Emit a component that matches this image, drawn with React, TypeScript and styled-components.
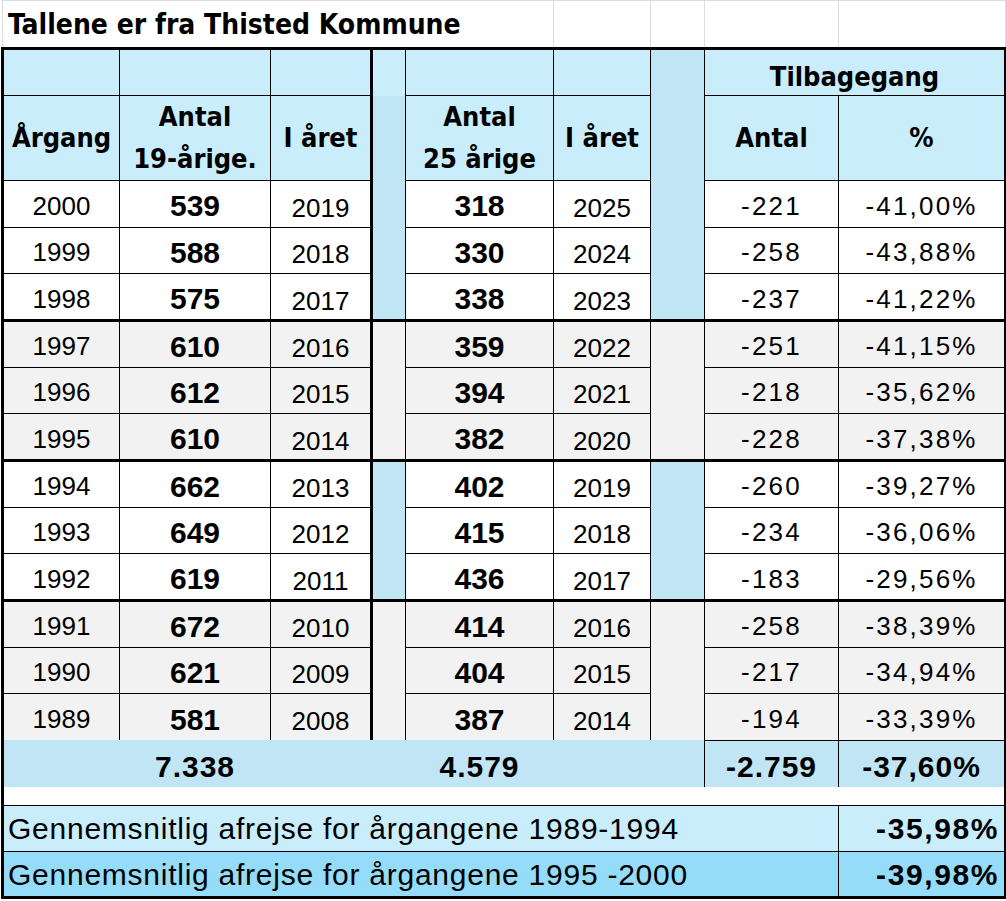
import React from "react";
import styled, { createGlobalStyle, css } from "styled-components";

const GlobalStyle = createGlobalStyle`
  html, body {
    margin: 0;
    padding: 0;
    background: #ffffff;
  }
  body {
    font-family: "Liberation Sans", Arial, sans-serif;
    color: #000;
  }
`;

const HEAD_BLUE = "#caedfb";
const BAR_BLUE = "#c0e6f5";
const DEEP_BLUE = "#95dcf8";
const GREY = "#f2f2f2";
const GRID = "#dcdcdc";

const THIN = "1px solid #000";
const THICK = "3px solid #000";

const narrow = css`
  font-family: "Liberation Sans Narrow", "Arial Narrow", "DejaVu Sans Condensed", sans-serif;
  font-weight: 700;
`;

const Sheet = styled.table`
  border-collapse: collapse;
  table-layout: fixed;
  width: 1004px;
  margin-left: 1px;
`;

const TitleCell = styled.td<{ $edge?: boolean }>`
  height: 46px;
  padding: 0 0 0 5px;
  border-top: 1px solid ${GRID};
  border-left: ${(p) => (p.$edge ? `1px solid ${GRID}` : "none")};
  border-right: 1px solid ${GRID};
  ${narrow};
  font-size: 28px;
  white-space: nowrap;
  overflow: visible;
  vertical-align: middle;
`;

type Edge = "thin" | "thick" | "none";

type CellProps = {
  $bg?: string;
  $top?: Edge;
  $bottom?: Edge;
  $left?: Edge;
  $right?: Edge;
};

const line = (v?: Edge) => (v === "thick" ? THICK : v === "none" ? "none" : THIN);

const Cell = styled.td<CellProps>`
  background: ${(p) => p.$bg || "#fff"};
  border-top: ${(p) => line(p.$top)};
  border-bottom: ${(p) => line(p.$bottom)};
  border-left: ${(p) => line(p.$left)};
  border-right: ${(p) => line(p.$right)};
  padding: 0;
  text-align: center;
  vertical-align: middle;
  white-space: nowrap;
`;

const HeadCell = styled(Cell)`
  ${narrow};
  font-size: 27px;
  line-height: 42px;
`;

const TopHeadCell = styled(HeadCell)`
  vertical-align: bottom;
  line-height: 36px;
`;

const NumCell = styled(Cell)<{ $bold?: boolean; $low?: boolean; $wide?: boolean }>`
  font-size: ${(p) => (p.$bold ? "30px" : "26px")};
  font-weight: ${(p) => (p.$bold ? 700 : 400)};
  letter-spacing: ${(p) => (p.$wide ? "2.2px" : "0")};
  padding-top: ${(p) => (p.$low ? "9px" : "5px")};
`;

const TotalCell = styled(Cell)`
  font-size: 30px;
  font-weight: 700;
  letter-spacing: 1px;
  padding-top: 6px;
`;

const NoteCell = styled(Cell)`
  text-align: left;
  padding-left: 4px;
  padding-top: 2px;
  font-size: 30px;
  letter-spacing: 0.75px;
`;

const NoteValue = styled(Cell)`
  text-align: right;
  padding-right: 5px;
  padding-top: 2px;
  font-size: 30px;
  font-weight: 700;
  letter-spacing: 1.6px;
`;

const DataRow = styled.tr`
  height: 46.67px;
`;

const FixedRow = styled.tr<{ $h: number }>`
  height: ${(p) => p.$h}px;
`;

type Row = [number, number, number, number, number, number, string];

const rows: Row[] = [
  [2000, 539, 2019, 318, 2025, -221, "-41,00%"],
  [1999, 588, 2018, 330, 2024, -258, "-43,88%"],
  [1998, 575, 2017, 338, 2023, -237, "-41,22%"],
  [1997, 610, 2016, 359, 2022, -251, "-41,15%"],
  [1996, 612, 2015, 394, 2021, -218, "-35,62%"],
  [1995, 610, 2014, 382, 2020, -228, "-37,38%"],
  [1994, 662, 2013, 402, 2019, -260, "-39,27%"],
  [1993, 649, 2012, 415, 2018, -234, "-36,06%"],
  [1992, 619, 2011, 436, 2017, -183, "-29,56%"],
  [1991, 672, 2010, 414, 2016, -258, "-38,39%"],
  [1990, 621, 2009, 404, 2015, -217, "-34,94%"],
  [1989, 581, 2008, 387, 2014, -194, "-33,39%"],
];

const widths = [117, 151, 101, 34, 148, 97, 54, 134, 167];

export default function App() {
  return (
    <>
      <GlobalStyle />
      <Sheet>
        <colgroup>
          {widths.map((w, i) => (
            <col key={i} style={{ width: w }} />
          ))}
        </colgroup>
        <tbody>
          <tr>
            <TitleCell colSpan={5} $edge>
              Tallene er fra Thisted Kommune
            </TitleCell>
            <TitleCell />
            <TitleCell />
            <TitleCell />
            <TitleCell />
          </tr>

          <FixedRow $h={47}>
            <TopHeadCell $bg={HEAD_BLUE} $top="thick" $left="thick" />
            <TopHeadCell $bg={HEAD_BLUE} $top="thick" />
            <TopHeadCell $bg={HEAD_BLUE} $top="thick" $right="thick" />
            <TopHeadCell $bg={HEAD_BLUE} $top="thick" $left="thick" $bottom="none" />
            <TopHeadCell $bg={HEAD_BLUE} $top="thick" />
            <TopHeadCell $bg={HEAD_BLUE} $top="thick" />
            <TopHeadCell $bg={BAR_BLUE} $top="thick" $bottom="none" />
            <TopHeadCell $bg={HEAD_BLUE} $top="thick" $right="thick" colSpan={2}>
              Tilbagegang
            </TopHeadCell>
          </FixedRow>

          <FixedRow $h={85}>
            <HeadCell $bg={HEAD_BLUE} $left="thick">Årgang</HeadCell>
            <HeadCell $bg={HEAD_BLUE}>
              Antal
              <br />
              19-årige.
            </HeadCell>
            <HeadCell $bg={HEAD_BLUE} $right="thick">I året</HeadCell>
            <HeadCell $bg={BAR_BLUE} $left="thick" $top="none" $bottom="none" />
            <HeadCell $bg={HEAD_BLUE}>
              Antal
              <br />
              25 årige
            </HeadCell>
            <HeadCell $bg={HEAD_BLUE}>I året</HeadCell>
            <HeadCell $bg={BAR_BLUE} $top="none" $bottom="none" />
            <HeadCell $bg={HEAD_BLUE}>Antal</HeadCell>
            <HeadCell $bg={HEAD_BLUE} $right="thick">%</HeadCell>
          </FixedRow>

          {rows.map((r, i) => {
            const group = Math.floor(i / 3);
            const shaded = group % 2 === 1;
            const bg = shaded ? GREY : "#fff";
            const bar = shaded ? GREY : BAR_BLUE;
            const first = i % 3 === 0;
            const lastInGroup = i % 3 === 2;
            const lastRow = i === rows.length - 1;
            const top: Edge = first && i > 0 ? "thick" : "thin";
            const bottom: Edge = lastRow ? "none" : lastInGroup ? "thick" : "thin";
            const barTop: Edge = first && i > 0 ? "thick" : "none";
            const barBottom: Edge = lastInGroup && !lastRow ? "thick" : "none";
            return (
              <DataRow key={r[0]}>
                <NumCell $bg={bg} $top={top} $bottom={bottom} $left="thick">
                  {r[0]}
                </NumCell>
                <NumCell $bg={bg} $top={top} $bottom={bottom} $bold>
                  {r[1]}
                </NumCell>
                <NumCell $bg={bg} $top={top} $bottom={bottom} $right="thick" $low>
                  {r[2]}
                </NumCell>
                <Cell $bg={bar} $top={barTop} $bottom={barBottom} $left="thick" />
                <NumCell $bg={bg} $top={top} $bottom={bottom} $bold>
                  {r[3]}
                </NumCell>
                <NumCell $bg={bg} $top={top} $bottom={bottom} $low>
                  {r[4]}
                </NumCell>
                <Cell $bg={bar} $top={barTop} $bottom={barBottom} />
                <NumCell $bg={bg} $top={top} $bottom={lastRow ? "thin" : bottom} $wide>
                  {r[5]}
                </NumCell>
                <NumCell
                  $bg={bg}
                  $top={top}
                  $bottom={lastRow ? "thin" : bottom}
                  $right="thick"
                  $wide
                >
                  {r[6]}
                </NumCell>
              </DataRow>
            );
          })}

          <FixedRow $h={47}>
            <TotalCell $bg={BAR_BLUE} $top="none" $bottom="none" $left="thick" $right="none" />
            <TotalCell $bg={BAR_BLUE} $top="none" $bottom="none" $left="none" $right="none">
              7.338
            </TotalCell>
            <TotalCell $bg={BAR_BLUE} $top="none" $bottom="none" $left="none" $right="none" />
            <TotalCell $bg={BAR_BLUE} $top="none" $bottom="none" $left="none" $right="none" />
            <TotalCell $bg={BAR_BLUE} $top="none" $bottom="none" $left="none" $right="none">
              4.579
            </TotalCell>
            <TotalCell $bg={BAR_BLUE} $top="none" $bottom="none" $left="none" $right="none" />
            <TotalCell $bg={BAR_BLUE} $top="none" $bottom="none" $left="none" />
            <TotalCell $bg={BAR_BLUE} $bottom="none">-2.759</TotalCell>
            <TotalCell $bg={BAR_BLUE} $bottom="none" $right="thick">
              -37,60%
            </TotalCell>
          </FixedRow>

          <FixedRow $h={18}>
            <Cell colSpan={9} $top="none" $left="thick" $right="thick" />
          </FixedRow>

          <FixedRow $h={46}>
            <NoteCell colSpan={8} $bg={HEAD_BLUE} $left="thick">
              Gennemsnitlig afrejse for årgangene 1989-1994
            </NoteCell>
            <NoteValue $bg={HEAD_BLUE} $right="thick">
              -35,98%
            </NoteValue>
          </FixedRow>
          <FixedRow $h={46}>
            <NoteCell colSpan={8} $bg={DEEP_BLUE} $left="thick" $bottom="thick">
              Gennemsnitlig afrejse for årgangene 1995 -2000
            </NoteCell>
            <NoteValue $bg={DEEP_BLUE} $right="thick" $bottom="thick">
              -39,98%
            </NoteValue>
          </FixedRow>
        </tbody>
      </Sheet>
    </>
  );
}
